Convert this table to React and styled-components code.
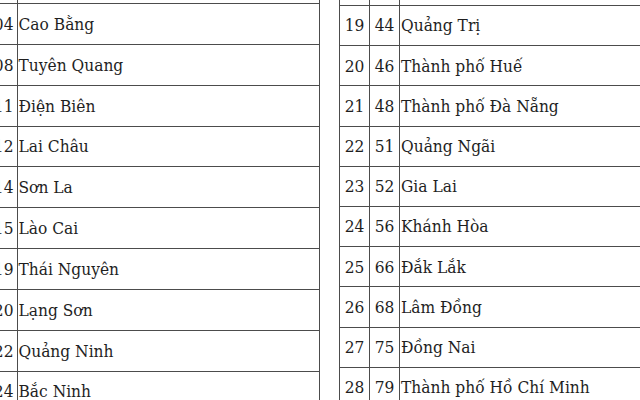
import React from "react";
import styled, { createGlobalStyle } from "styled-components";

const Global = createGlobalStyle`
  html, body { margin: 0; padding: 0; background: #fff; }
  body { width: 640px; height: 400px; overflow: hidden; }
  #root { width: 640px; height: 400px; overflow: hidden; }
`;

const LINE = "1.8px solid #4c4c4c";

const Page = styled.div`
  display: flex;
  width: 640px;
  height: 400px;
  overflow: hidden;
  background: #fff;
  font-family: "DejaVu Serif Condensed", "DejaVu Serif", serif;
  font-stretch: condensed;
  font-size: 17.2px;
  color: #1f1f1f;
`;

const Table = styled.div`
  display: grid;
  grid-template-columns: ${(p) => p.$cols};
  grid-auto-rows: ${(p) => p.$row}px;
  grid-template-rows: ${(p) => p.$first}px;
  flex: none;
  width: ${(p) => p.$width}px;
  margin-left: ${(p) => p.$gap || 0}px;
  border-left: ${(p) => (p.$edge ? LINE : "none")};
  box-sizing: border-box;
  height: 420px;
`;

const Cell = styled.div`
  box-sizing: border-box;
  display: flex;
  align-items: center;
  justify-content: ${(p) => p.$align || "flex-start"};
  padding: ${(p) => p.$pad || "0"};
  border-right: ${(p) => (p.$noRight ? "none" : LINE)};
  border-bottom: ${LINE};
  white-space: nowrap;
  overflow: hidden;
  line-height: 1;
  padding-top: 1px;
`;

const left = [
  ["04", "Cao Bằng"],
  ["08", "Tuyên Quang"],
  ["11", "Điện Biên"],
  ["12", "Lai Châu"],
  ["14", "Sơn La"],
  ["15", "Lào Cai"],
  ["19", "Thái Nguyên"],
  ["20", "Lạng Sơn"],
  ["22", "Quảng Ninh"],
  ["24", "Bắc Ninh"],
];

const right = [
  ["19", "44", "Quảng Trị"],
  ["20", "46", "Thành phố Huế"],
  ["21", "48", "Thành phố Đà Nẵng"],
  ["22", "51", "Quảng Ngãi"],
  ["23", "52", "Gia Lai"],
  ["24", "56", "Khánh Hòa"],
  ["25", "66", "Đắk Lắk"],
  ["26", "68", "Lâm Đồng"],
  ["27", "75", "Đồng Nai"],
  ["28", "79", "Thành phố Hồ Chí Minh"],
];

export default function App() {
  return (
    <>
      <Global />
      <Page>
        <Table $cols="17.5px 302px" $row={40.85} $first={4} $width={320}>
          <Cell />
          <Cell />
          {left.map(([code, name]) => (
            <React.Fragment key={code}>
              <Cell $align="flex-end" $pad="0 3px 0 0">{code}</Cell>
              <Cell $pad="0 0 0 1px">{name}</Cell>
            </React.Fragment>
          ))}
        </Table>
        <Table $cols="30px 30px 400px" $row={40.2} $first={6} $width={460} $gap={19} $edge>
          <Cell />
          <Cell />
          <Cell $noRight />
          {right.map(([n, code, name]) => (
            <React.Fragment key={n}>
              <Cell $align="center">{n}</Cell>
              <Cell $align="center">{code}</Cell>
              <Cell $noRight $pad="0 0 0 1px">{name}</Cell>
            </React.Fragment>
          ))}
        </Table>
      </Page>
    </>
  );
}
